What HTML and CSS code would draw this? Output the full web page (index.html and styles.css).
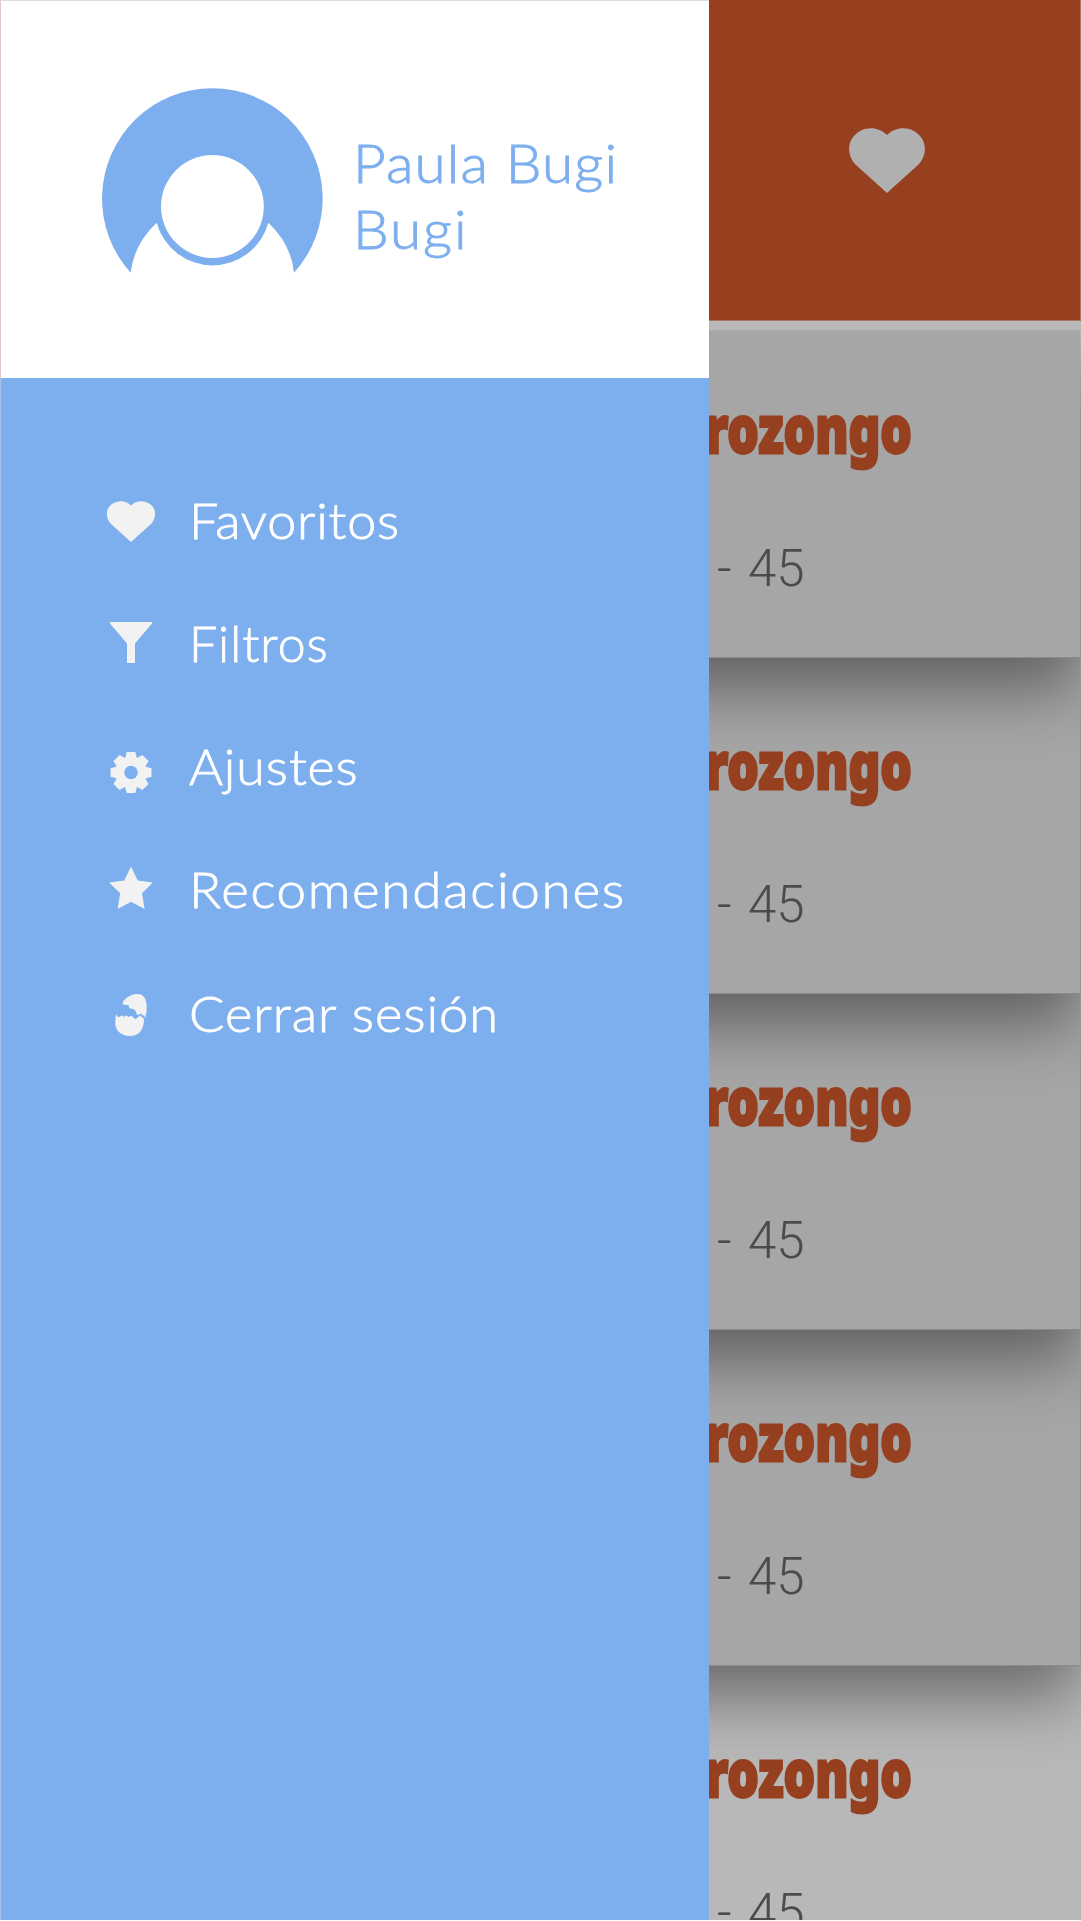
FILE: index.html
```html
<!DOCTYPE html>
<html lang="es">
<head>
<meta charset="utf-8">
<title>Menú</title>
<link rel="stylesheet" href="styles.css">
</head>
<body>
<div class="app">
  <main class="page">
    <header class="topbar">
      <svg class="topbar-heart" viewBox="0 0 76 66"><path d="M38 66L6 37C-2 29-2 17 3 10C11-2 28-3 38 7C48-3 65-2 73 10C78 17 78 29 70 37Z"/></svg>
    </header>
    <section class="cards">
      <article class="card first"><h2>prozongo</h2><p>- 45</p></article>
      <article class="card"><h2>prozongo</h2><p>- 45</p></article>
      <article class="card"><h2>prozongo</h2><p>- 45</p></article>
      <article class="card"><h2>prozongo</h2><p>- 45</p></article>
      <article class="card last"><h2>prozongo</h2><p>- 45</p></article>
    </section>
  </main>
  <aside class="drawer">
    <div class="profile">
      <svg class="avatar" viewBox="102 88 221 185"><path d="M130.7 272.7A110.3 110.3 0 1 1 294 272.7Q291 244 268.3 222.7A57.8 57.8 0 0 1 156.7 222.7Q134 244 130.7 272.7Z"/><circle cx="212.4" cy="206.5" r="51.4"/></svg>
      <div class="name"><span class="name-first">Paula Bugi</span><span class="name-last">Bugi</span></div>
    </div>
    <nav class="menu">
      <a class="item"><svg viewBox="0 0 48 48"><path d="M24 46L4 28C-1 23-1 15 2 11C7 4 18 3 24 9.5C30 3 41 4 46 11C49 15 49 23 44 28Z"/></svg><span class="favoritos">Favoritos</span></a>
      <a class="item"><svg viewBox="0 0 48 48"><path d="M3 3H45V4.5L28 24.5V44H20V24.5L3 4.5Z"/></svg><span class="filtros">Filtros</span></a>
      <a class="item"><svg viewBox="0 0 48 48"><g transform="translate(24 30.5)"><g id="teeth"><path id="tooth" d="M-6-14L-4.3-20.5H4.3L6-14V14L4.3 20.5H-4.3L-6 14Z"/><use href="#tooth" transform="rotate(90)"/></g><use href="#teeth" transform="rotate(45)"/><circle r="15.5"/><circle class="hole" r="6.8"/></g></svg><span class="ajustes">Ajustes</span></a>
      <a class="item"><svg viewBox="0 0 48 48"><path d="M24 1.5L30.7 15.4L45.8 17.4L35 28.3L37.6 44L24 36.8L10.6 44L13.2 28.3L2 17.4L17.3 15.4Z"/></svg><span class="recomendaciones">Recomendaciones</span></a>
      <a class="item"><svg viewBox="0 0 48 48"><path d="M15.7 12.9C20 7.5 25 4.9 30.7 4.9C37 4.9 39.7 10.5 39.7 17.5C39.7 22.5 39 26.5 38.3 29.5L37.3 25.9L35.5 26.5L34.5 24.5L30 25.9L28.7 21.9L26.3 19.9L22.3 19.2L21.7 16.2L16 15.5Z"/><path d="M9.3 25.2L11 28.2L15.7 26.5L17.3 27.9L19.3 26.2L21.7 27.9L24.3 26.7L28.5 30.2L33 26.5L37 29.9C37 40.5 32 46.9 23 46.9C14 46.9 8.3 41.5 8.3 34.2C8.3 30.5 8.5 27.5 9.3 25.2Z"/></svg><span class="cerrar">Cerrar sesión</span></a>
    </nav>
  </aside>
</div>
</body>
</html>
```
FILE: styles.css
```css
* { box-sizing: border-box; }
body { margin: 0; background: #fff; }
.app { position: relative; width: 1081px; height: 1920px; overflow: hidden; background: #b8b8b8; }
.page { display: flex; flex-direction: column; height: 1920px; }
.topbar { position: relative; z-index: 5; flex: none; height: 321px; display: flex; justify-content: flex-end; align-items: flex-start; padding: 128px 155px 0 0; background: #964020; border-bottom: 1px solid #a87462; border-right: 1px solid #a8776a; box-shadow: 0 9px 0 #b8b8b8; }
.topbar-heart { width: 76px; height: 65px; fill: #b0b0b0; }
.cards { display: flex; flex-direction: column; padding: 9px 1px 0 0; }
.card { position: relative; flex: none; height: 336px; padding: 60px 169px 0 709px; background: #a6a6a6; border-bottom: 1px solid #8b8b8b; box-shadow: 0 34px 60px -3px rgba(0,0,0,.42); z-index: 4; }
.card:nth-child(2) { z-index: 3; }
.card:nth-child(3) { z-index: 2; }
.card:nth-child(4) { z-index: 1; }
.card.first { height: 328px; padding-top: 51px; border-top: 1px solid #aaa; }
.card.last { z-index: 0; background: none; box-shadow: none; border: 0; }
.card h2 { margin: 0 -1px 0 0; height: 90px; display: flex; justify-content: flex-end; font: 900 66px/90px "Noto Sans", sans-serif; font-stretch: 62.5%; color: #964020; -webkit-text-stroke: 2.8px #964020; transform: scaleX(.752); transform-origin: right; }
.card p { margin: 67px 0 0 8px; font: 300 51px/60px Roboto, sans-serif; color: #4b4b4b; word-spacing: 4px; }
.drawer { position: absolute; left: 0; top: 0; z-index: 10; width: 709px; height: 1920px; display: flex; flex-direction: column; background: #7dafef; border-left: 1px solid #a5c4ec; }
.profile { flex: none; height: 378px; display: flex; align-items: flex-start; background: #fff; padding: 87px 0 0 101px; gap: 30px; border-top: 1px solid #ddd; margin-left: -1px; border-left: 1px solid #ddc8d0; }
.avatar { flex: none; width: 221px; height: 185px; fill: #7dafef; }
.avatar circle { fill: #fff; }
.name { display: flex; flex-direction: column; padding-top: 42px; font: 300 54px/66px Lato, sans-serif; color: #7dafef; white-space: nowrap; -webkit-text-stroke: .9px #7dafef; transform: scaleX(1.05); transform-origin: left; }
.name-first { letter-spacing: 1.1px; }
.name-last { letter-spacing: 1.8px; }
.menu { display: flex; flex-direction: column; padding: 80px 0 0 106px; }
.item { display: flex; align-items: center; gap: 34px; height: 123.25px; font: 300 50px/60px Lato, sans-serif; color: #fff; white-space: nowrap; }
.item span { -webkit-text-stroke: .8px #fff; transform-origin: left; }
.item svg { flex: none; width: 48px; height: 48px; fill: #f2f2f2; overflow: visible; }
.item .hole { fill: #7dafef; }
.favoritos { letter-spacing: .8px; transform: scaleX(1.04); }
.filtros { letter-spacing: 1px; }
.ajustes { letter-spacing: .9px; transform: scaleX(1.04); }
.recomendaciones { letter-spacing: 1.55px; transform: scaleX(1.06); }
.cerrar { letter-spacing: .9px; transform: scaleX(1.05); }
```
